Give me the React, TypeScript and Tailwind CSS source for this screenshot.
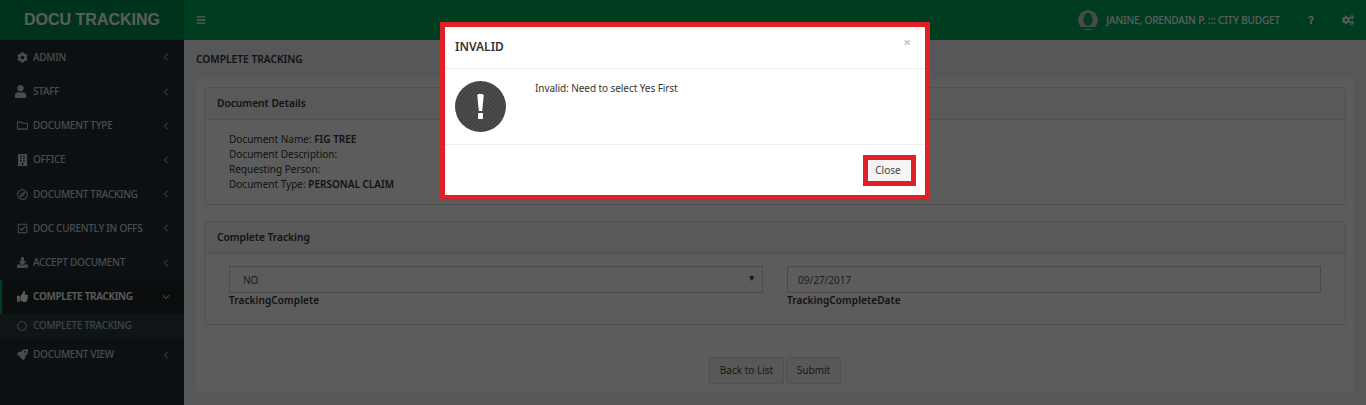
import { ChevronDown, ChevronLeft } from "lucide-react";
import {
  FaBars,
  FaBuilding,
  FaCog,
  FaCogs,
  FaDownload,
  FaQuestion,
  FaRegCheckSquare,
  FaRegCircle,
  FaRegCompass,
  FaRegFolder,
  FaRocket,
  FaThumbsUp,
  FaUser,
} from "react-icons/fa";

const FONT = "font-['Noto_Sans',sans-serif]";

const menu = [
  { label: "ADMIN", icon: FaCog, iconClass: "w-[11px] h-[11px]" },
  { label: "STAFF", icon: FaUser, iconClass: "w-[13px] h-[13px] -ml-[3px] mr-[1px]" },
  { label: "DOCUMENT TYPE", icon: FaRegFolder, iconClass: "w-[11px] h-[11px]" },
  { label: "OFFICE", icon: FaBuilding, iconClass: "w-[11px] h-[12px]" },
  { label: "DOCUMENT TRACKING", icon: FaRegCompass, iconClass: "w-[11px] h-[11px]" },
  { label: "DOC CURENTLY IN OFFS", icon: FaRegCheckSquare, iconClass: "w-[11px] h-[11px]" },
  { label: "ACCEPT DOCUMENT", icon: FaDownload, iconClass: "w-[11px] h-[11px]" },
];

function MenuRow({ label, icon: Icon, iconClass }: { label: string; icon: typeof FaCog; iconClass: string }) {
  return (
    <div className="h-[34.2px] flex items-center pl-[15px] pr-[12px] text-[#c6d4da] border-l-2 border-transparent">
      <Icon className={`flex-shrink-0 ${iconClass}`} />
      <span className="ml-[5px] flex-1 text-[10px] font-medium tracking-[-0.25px] whitespace-nowrap">{label}</span>
      <ChevronLeft className="w-3 h-3" />
    </div>
  );
}

function Sidebar() {
  return (
    <aside className="w-[184px] flex-shrink-0 bg-[#222d32] pt-[0.3px]">
      {menu.map((m) => (
        <MenuRow key={m.label} label={m.label} icon={m.icon} iconClass={m.iconClass} />
      ))}
      <div className="h-[34.2px] flex items-center pl-[15px] pr-[12px] text-white border-l-2 border-[#00a65a] bg-[#1e282c]">
        <FaThumbsUp className="w-[11px] h-[11px] flex-shrink-0" />
        <span className="ml-[5px] flex-1 text-[10px] font-semibold tracking-[-0.3px] whitespace-nowrap">COMPLETE TRACKING</span>
        <ChevronDown className="w-3 h-3" />
      </div>
      <div className="h-[24px] flex items-center pl-[17px] bg-[#2c3b41] text-[#a8bcc6]">
        <FaRegCircle className="w-[10px] h-[10px]" />
        <span className="ml-[6px] text-[10px] font-medium tracking-[-0.3px]">COMPLETE TRACKING</span>
      </div>
      <MenuRow label="DOCUMENT VIEW" icon={FaRocket} iconClass="w-[11px] h-[11px]" />
    </aside>
  );
}

function Panel({ title, children, className }: { title: string; children: React.ReactNode; className: string }) {
  return (
    <section className={`border border-[#dddddd] rounded-[3px] bg-white ${className}`}>
      <h3 className="h-[32px] flex items-center px-3 bg-[#f5f5f5] border-b border-[#dddddd] text-[10.2px] font-semibold text-[#333]">
        {title}
      </h3>
      {children}
    </section>
  );
}

function Modal() {
  return (
    <div className="absolute left-[440px] top-[22px] w-[490px] h-[178px] bg-white border-[5px] border-[#e01f26] text-[#333]">
      <div className="h-[42px] flex items-center justify-between px-[10px] border-b border-[#eeeeee]">
        <h4 className="text-[12px] font-semibold text-[#333] -mt-[1px]">INVALID</h4>
        <span className="text-[#c4c4c4] text-[13px] font-bold -mt-[10px] mr-[4px]">×</span>
      </div>
      <div className="h-[76px] flex items-start border-b border-[#eeeeee] pt-[12px] pl-[10px]">
        <svg viewBox="0 0 51 51" className="w-[51px] h-[51px] flex-shrink-0">
          <defs>
            <pattern id="stripes" width="3" height="3" patternUnits="userSpaceOnUse" patternTransform="rotate(45)">
              <rect width="3" height="3" fill="#4c4c4c" />
              <rect width="1" height="3" fill="#3d3d3d" />
            </pattern>
          </defs>
          <circle cx="25.5" cy="25.5" r="25.5" fill="url(#stripes)" />
          <path d="M22.300 14.500a1.500 1.500 0 0 1 1.500-1.500h3.400a1.500 1.500 0 0 1 1.500 1.500l-1.500 15.500h-3.400z" fill="#fff" />
          <rect x="23" y="32" width="5" height="6" rx="1" fill="#fff" />
        </svg>
        <p className="ml-[29px] text-[10px] leading-[14px] tracking-[-0.07px]">Invalid: Need to select Yes First</p>
      </div>
      <div className="flex justify-end pt-[10px] pr-[9px]">
        <button className="w-[53px] h-[31px] border-[5px] border-[#e01f26] bg-[#f4f4f4] text-[10px] text-[#444] pr-[3px]">Close</button>
      </div>
    </div>
  );
}

export default function App() {
  return (
    <div className={`relative w-[1366px] h-[405px] overflow-hidden bg-[#ecf0f5] ${FONT}`}>
      <header className="h-[40px] flex bg-[#00a65a]">
        <div className="w-[184px] flex-shrink-0 bg-[#008d4c] flex items-center justify-center text-white font-['Liberation_Sans',sans-serif] font-bold text-[16px]">
          DOCU TRACKING
        </div>
        <div className="flex-1 flex items-center text-white">
          <FaBars className="ml-[12px] w-[10px] h-[10px]" />
          <div className="ml-auto flex items-center">
            <svg viewBox="0 0 20 20" className="w-[20px] h-[20px]">
              <circle cx="10" cy="10" r="10" fill="#c4cccc" />
              <ellipse cx="10" cy="9.500" rx="4.500" ry="6.500" fill="#00a65a" />
              <rect x="0" y="17" width="20" height="3" fill="#00a65a" />
              <rect x="6" y="19" width="8" height="1" fill="#c4cccc" />
            </svg>
            <span className="ml-[8px] text-[10px] font-medium tracking-[-0.15px]">JANINE, ORENDAIN P. ::: CITY BUDGET</span>
            <FaQuestion className="ml-[27px] w-[8px] h-[8px]" />
            <FaCogs className="ml-[27px] mr-[12px] w-[12px] h-[12px]" />
          </div>
        </div>
      </header>

      <div className="flex h-[365px]">
        <Sidebar />
        <main className="flex-1 pl-[12px] pr-[12px] text-[#333] text-[10px]">
          <h1 className="h-[39px] flex items-center text-[10.2px] font-semibold">COMPLETE TRACKING</h1>
          <div className="h-[313px] bg-white rounded-[3px] px-[8px] pt-[8px]">
            <Panel title="Document Details" className="h-[118px]">
              <div className="pl-[24px] pt-[12px] leading-[15px]">
                <p>Document Name: <b className="font-semibold">FIG TREE</b></p>
                <p>Document Description:</p>
                <p>Requesting Person:</p>
                <p>Document Type: <b className="font-semibold">PERSONAL CLAIM</b></p>
              </div>
            </Panel>
            <Panel title="Complete Tracking" className="h-[104px] mt-[16px]">
              <div className="grid grid-cols-2 gap-[24px] px-[24px] pt-[12px]">
                <div>
                  <div className="h-[27px] border border-[#cccccc] flex items-center justify-between pl-[13px] pr-[6px] pt-[1px] text-[#555]">
                    <span>NO</span>
                    <span className="text-[8.5px] text-[#333] -mt-[3px]">▼</span>
                  </div>
                  <label className="block font-semibold leading-[14px] tracking-[0.1px]">TrackingComplete</label>
                </div>
                <div>
                  <div className="h-[27px] border border-[#cccccc] flex items-center pl-[10px] pt-[1px] text-[#555]">09/27/2017</div>
                  <label className="block font-semibold leading-[14px] tracking-[0.1px]">TrackingCompleteDate</label>
                </div>
              </div>
            </Panel>
            <div className="flex justify-center gap-[2px] mt-[32px]">
              <button className="w-[75px] h-[27px] bg-[#f4f4f4] border border-[#dddddd] rounded-[3px] text-[#444]">Back to List</button>
              <button className="w-[55px] h-[27px] bg-[#f4f4f4] border border-[#dddddd] rounded-[3px] text-[#444]">Submit</button>
            </div>
          </div>
        </main>
      </div>

      <div className="absolute inset-0 bg-black/[0.64]" />
      <Modal />
    </div>
  );
}
